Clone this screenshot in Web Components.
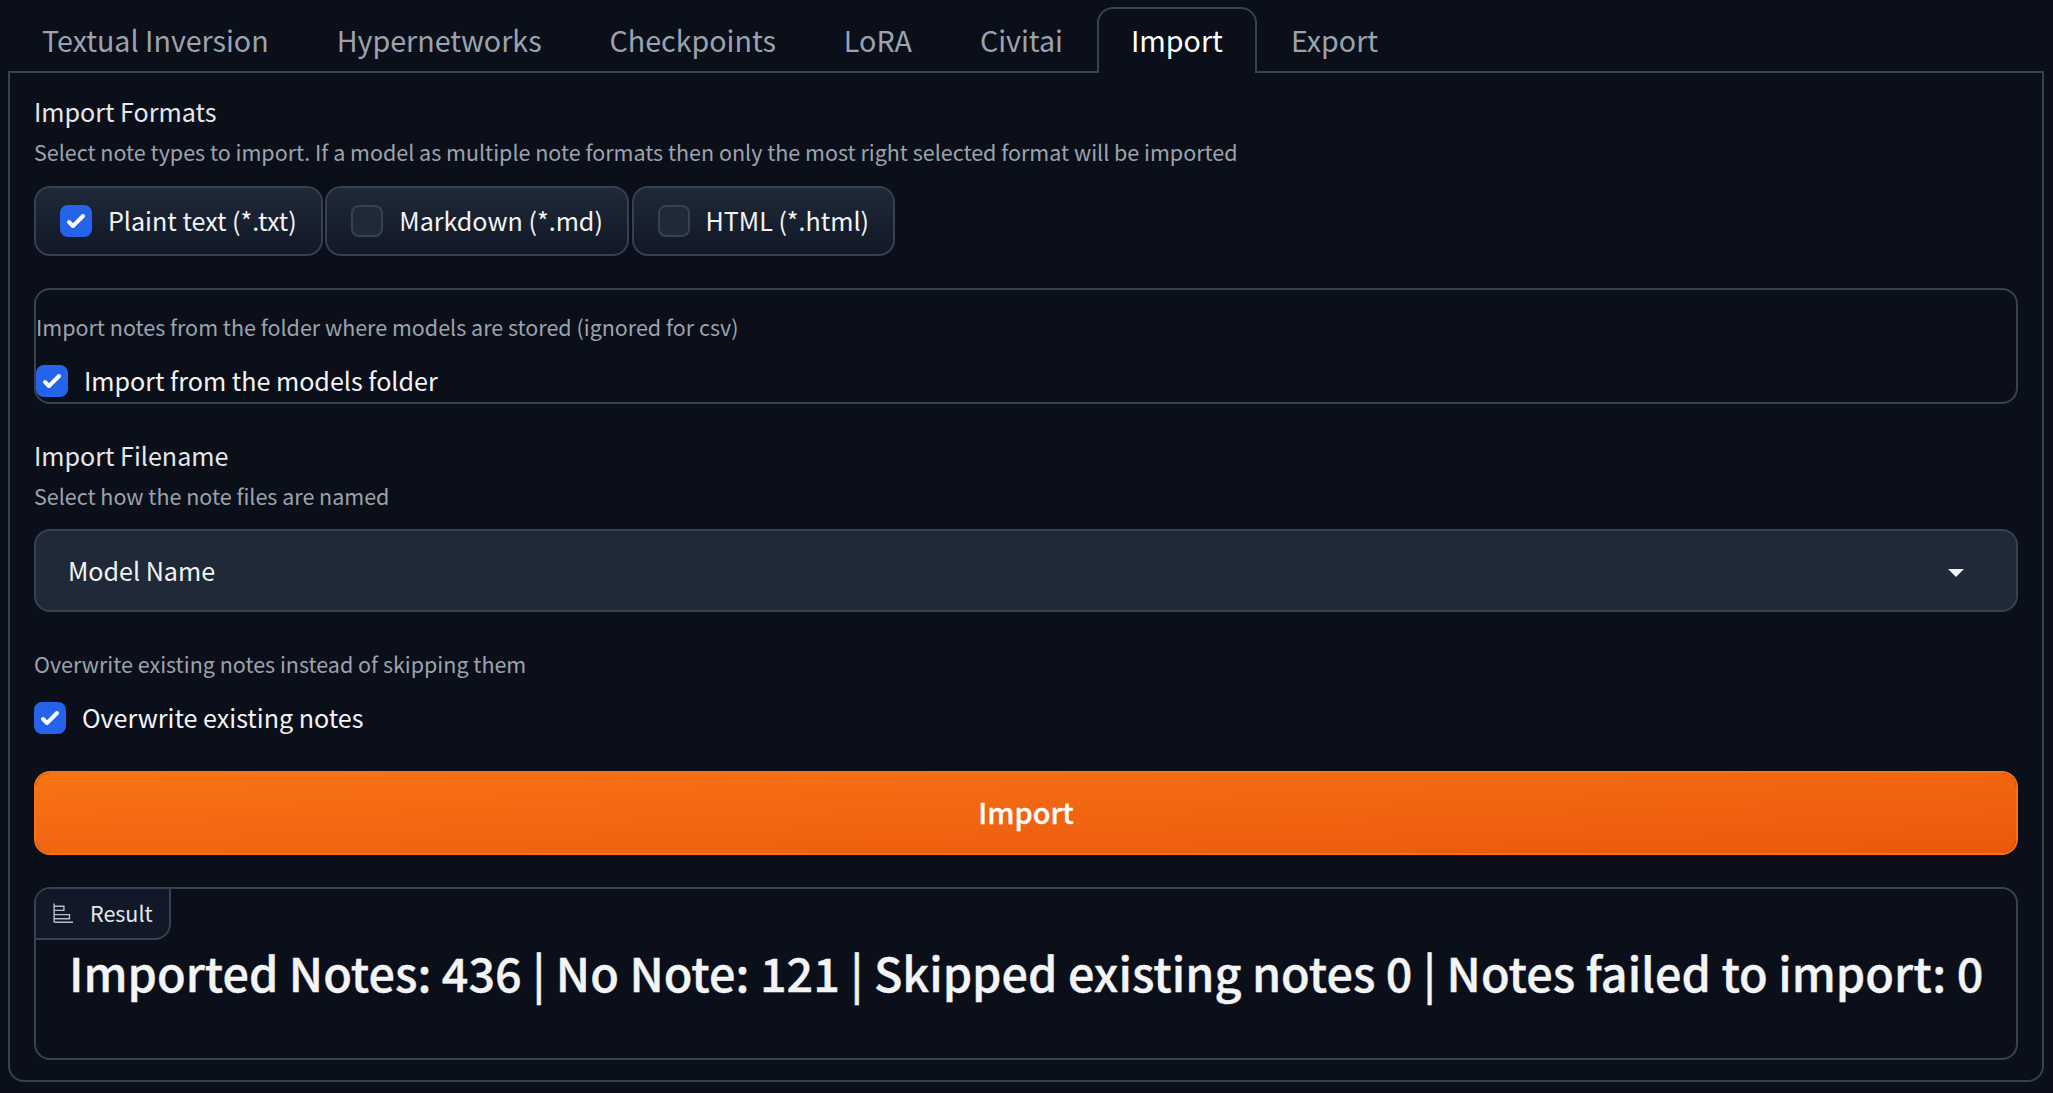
<!DOCTYPE html>
<html lang="en">
<head>
<meta charset="utf-8">
<title>Model Notes</title>
<style>
  html { background: #0b0f19; }
  body {
    margin: 0;
    background: #0b0f19;
    color: #f3f4f6;
    font-family: "Noto Sans CJK SC", "Source Sans Pro", sans-serif;
    --line: #374151;
    --muted: #9ca3af;
    --fs-lg: 28.655px;
    --fs-md: 25.09px;
    --fs-sm: 21.49px;
  }
</style>
</head>
<body>
<notes-app></notes-app>
<script>
const define = (name, html, setup) => {
  const tpl = document.createElement('template');
  tpl.innerHTML = html;
  customElements.define(name, class extends HTMLElement {
    connectedCallback() {
      if (this.shadowRoot) return;
      const root = this.attachShadow({ mode: 'open' });
      root.append(tpl.content.cloneNode(true));
      if (setup) setup(this, root);
    }
  });
};

define('tab-button', `
<style>
  :host { display: flex; align-items: center; box-sizing: border-box; height: 66px; padding: 0 32px 3px;
    border: 2px solid transparent; border-bottom: 0; border-radius: 16px 16px 0 0;
    color: var(--muted); font-size: var(--fs-lg); line-height: 44px; white-space: nowrap; }
  :host([selected]) { color: #fff; border-color: var(--line); background: #0b0f19; }
</style><slot></slot>`);

define('tab-bar', `
<style>
  :host { display: flex; position: relative; margin-bottom: -2px; }
</style><slot></slot>`);

define('tab-panel', `
<style>
  :host { display: flex; flex-direction: column; box-sizing: border-box; height: 1011px; padding: 17px 24px 20px;
    border: 2px solid var(--line); border-radius: 0 0 16px 16px; }
</style><slot></slot>`);

define('field-title', `
<style>
  :host { display: block; color: #e5e7eb; font-size: var(--fs-md); line-height: 42px; height: 42px; white-space: nowrap; }
</style><slot></slot>`);

define('field-info', `
<style>
  :host { display: block; color: var(--muted); font-size: var(--fs-sm); line-height: 36px; height: 36px; white-space: nowrap; }
</style><slot></slot>`);

define('check-item', `
<style>
  :host { display: flex; align-items: center; gap: 16px; height: 32px; font-size: var(--fs-md); white-space: nowrap; }
  i { box-sizing: border-box; flex: none; width: 32px; height: 32px; border: 2px solid var(--line); border-radius: 8px; background: #1f2937; }
  svg { display: none; width: 32px; height: 32px; margin: -2px; }
  :host([checked]) i { background: #2563eb; border-color: #2563eb; }
  :host([checked]) svg { display: block; }
  span { line-height: 32px; padding-bottom: 3px; }
</style>
<i><svg viewBox="0 0 16 16" fill="#fff"><path d="M12.207 4.793a1 1 0 010 1.414l-5 5a1 1 0 01-1.414 0l-2-2a1 1 0 011.414-1.414L6.5 9.086l4.293-4.293a1 1 0 011.414 0z"/></svg></i>
<span><slot></slot></span>`);

define('check-chip', `
<style>
  :host { display: flex; align-items: center; box-sizing: border-box; height: 70px; padding: 0 24px;
    border: 2px solid var(--line); border-radius: 16px;
    background: linear-gradient(to bottom, #1f2937, #111827) padding-box; }
</style><check-item><slot></slot></check-item>`,
(host, root) => root.querySelector('check-item').toggleAttribute('checked', host.hasAttribute('checked')));

define('select-box', `
<style>
  :host { display: flex; align-items: center; justify-content: space-between; box-sizing: border-box; height: 83px;
    padding: 0 52px 0 32px; border: 2px solid var(--line); border-radius: 16px; background: #1f2937;
    font-size: var(--fs-md); line-height: 42px; }
  span { padding-bottom: 2px; }
  svg { display: block; width: 16px; height: 8px; margin-top: 4px; }
</style><span><slot></slot></span><svg viewBox="0 0 16 8" fill="#f3f4f6"><path d="M0 0h16L8 8z"/></svg>`);

define('primary-button', `
<style>
  :host { display: block; }
  button { display: block; box-sizing: border-box; width: 100%; height: 84px; padding: 0 0 3px; border: 2px solid #f97316;
    border-radius: 16px; background: linear-gradient(to bottom right, #f97316, #ea580c) padding-box;
    color: #fff; font: 500 28.9px/77px "Noto Sans CJK SC", sans-serif; -webkit-text-stroke: .3px #fff; }
</style><button><slot></slot></button>`);

define('result-box', `
<style>
  :host { display: block; box-sizing: border-box; height: 173px; border: 2px solid var(--line); border-radius: 16px; overflow: hidden; }
  .tag { display: flex; align-items: center; gap: 15.6px; box-sizing: border-box; width: 135px; height: 51px; padding-left: 16px;
    border: solid var(--line); border-width: 0 2px 2px 0; border-radius: 0 0 16px 0; background: #111827;
    color: #e5e7eb; font-size: var(--fs-sm); line-height: 36px; }
  .tag svg { display: block; width: 22.4px; height: 22.4px; opacity: .8; }
  .tag span { padding-bottom: 1px; }
  h1 { margin: -2px 0 0; padding: 0 33px; font-size: 46.72px; font-weight: 500; line-height: 68px; white-space: nowrap;
    -webkit-text-stroke: .4px currentColor; }
</style>
<div class="tag">
  <svg viewBox="0 0 32 32"><path fill="currentColor" d="M4 2H2v26a2 2 0 0 0 2 2h26v-2H4v-3h22v-8H4v-4h14V5H4Zm20 17v4H4v-4ZM16 7v4H4V7Z"/></svg>
  <span><slot name="label"></slot></span>
</div>
<h1><slot></slot></h1>`);

define('notes-app', `
<style>
  :host { display: block; padding: 7px 9px 0 8px; }
  .chips { display: flex; gap: 2.6px; margin-top: 16px; }
  .group { box-sizing: border-box; height: 116px; margin-top: 32px; padding-top: 19px; border: 2px solid var(--line); border-radius: 16px; }
  .group check-item { margin-top: 20px; }
  .filename { margin-top: 30px; }
  .filename select-box { margin-top: 15px; }
  .overwrite { margin-top: 34px; }
  .overwrite check-item { margin-top: 20px; }
  primary-button { margin-top: 37px; }
  result-box { margin-top: 32px; }
  section field-info { margin-top: 2px; }
  .group field-info, .overwrite field-info { margin-top: 0; }
</style>
<tab-bar>
  <tab-button>Textual Inversion</tab-button><tab-button>Hypernetworks</tab-button><tab-button>Checkpoints</tab-button><tab-button>LoRA</tab-button><tab-button>Civitai</tab-button><tab-button selected>Import</tab-button><tab-button>Export</tab-button>
</tab-bar>
<tab-panel>
  <section>
    <field-title>Import Formats</field-title>
    <field-info>Select note types to import. If a model as multiple note formats then only the most right selected format will be imported</field-info>
    <div class="chips">
      <check-chip checked>Plaint text (*.txt)</check-chip>
      <check-chip>Markdown (*.md)</check-chip>
      <check-chip>HTML (*.html)</check-chip>
    </div>
  </section>
  <section class="group">
    <field-info>Import notes from the folder where models are stored (ignored for csv)</field-info>
    <check-item checked>Import from the models folder</check-item>
  </section>
  <section class="filename">
    <field-title>Import Filename</field-title>
    <field-info>Select how the note files are named</field-info>
    <select-box>Model Name</select-box>
  </section>
  <section class="overwrite">
    <field-info>Overwrite existing notes instead of skipping them</field-info>
    <check-item checked>Overwrite existing notes</check-item>
  </section>
  <primary-button>Import</primary-button>
  <result-box><span slot="label">Result</span>Imported Notes: 436 | No Note: 121 | Skipped existing notes 0 | Notes failed to import: 0</result-box>
</tab-panel>`);
</script>
</body>
</html>
